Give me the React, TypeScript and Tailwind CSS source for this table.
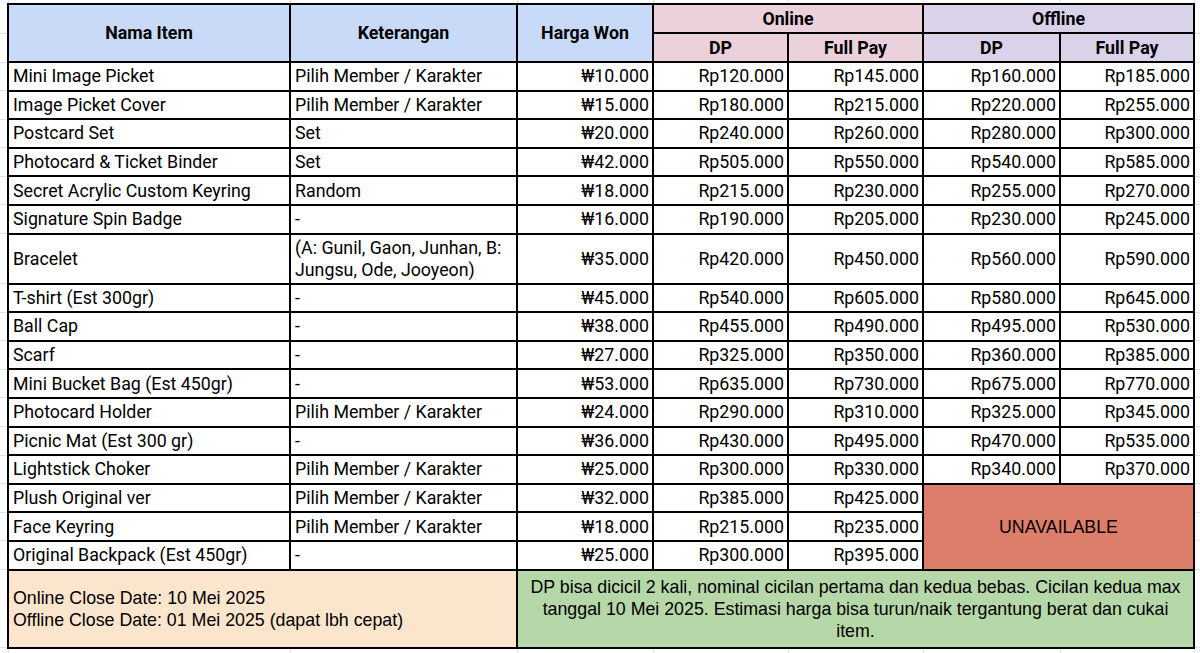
type Row = {
  name: string;
  note: string;
  won: string;
  onDp: string;
  onFull: string;
  offDp?: string;
  offFull?: string;
  tall?: boolean;
};

const rows: Row[] = [
  { name: "Mini Image Picket", note: "Pilih Member / Karakter", won: "₩10.000", onDp: "Rp120.000", onFull: "Rp145.000", offDp: "Rp160.000", offFull: "Rp185.000" },
  { name: "Image Picket Cover", note: "Pilih Member / Karakter", won: "₩15.000", onDp: "Rp180.000", onFull: "Rp215.000", offDp: "Rp220.000", offFull: "Rp255.000" },
  { name: "Postcard Set", note: "Set", won: "₩20.000", onDp: "Rp240.000", onFull: "Rp260.000", offDp: "Rp280.000", offFull: "Rp300.000" },
  { name: "Photocard & Ticket Binder", note: "Set", won: "₩42.000", onDp: "Rp505.000", onFull: "Rp550.000", offDp: "Rp540.000", offFull: "Rp585.000" },
  { name: "Secret Acrylic Custom Keyring", note: "Random", won: "₩18.000", onDp: "Rp215.000", onFull: "Rp230.000", offDp: "Rp255.000", offFull: "Rp270.000" },
  { name: "Signature Spin Badge", note: "-", won: "₩16.000", onDp: "Rp190.000", onFull: "Rp205.000", offDp: "Rp230.000", offFull: "Rp245.000" },
  { name: "Bracelet", note: "(A: Gunil, Gaon, Junhan, B: Jungsu, Ode, Jooyeon)", won: "₩35.000", onDp: "Rp420.000", onFull: "Rp450.000", offDp: "Rp560.000", offFull: "Rp590.000", tall: true },
  { name: "T-shirt (Est 300gr)", note: "-", won: "₩45.000", onDp: "Rp540.000", onFull: "Rp605.000", offDp: "Rp580.000", offFull: "Rp645.000" },
  { name: "Ball Cap", note: "-", won: "₩38.000", onDp: "Rp455.000", onFull: "Rp490.000", offDp: "Rp495.000", offFull: "Rp530.000" },
  { name: "Scarf", note: "-", won: "₩27.000", onDp: "Rp325.000", onFull: "Rp350.000", offDp: "Rp360.000", offFull: "Rp385.000" },
  { name: "Mini Bucket Bag (Est 450gr)", note: "-", won: "₩53.000", onDp: "Rp635.000", onFull: "Rp730.000", offDp: "Rp675.000", offFull: "Rp770.000" },
  { name: "Photocard Holder", note: "Pilih Member / Karakter", won: "₩24.000", onDp: "Rp290.000", onFull: "Rp310.000", offDp: "Rp325.000", offFull: "Rp345.000" },
  { name: "Picnic Mat (Est 300 gr)", note: "-", won: "₩36.000", onDp: "Rp430.000", onFull: "Rp495.000", offDp: "Rp470.000", offFull: "Rp535.000" },
  { name: "Lightstick Choker", note: "Pilih Member / Karakter", won: "₩25.000", onDp: "Rp300.000", onFull: "Rp330.000", offDp: "Rp340.000", offFull: "Rp370.000" },
  { name: "Plush Original ver", note: "Pilih Member / Karakter", won: "₩32.000", onDp: "Rp385.000", onFull: "Rp425.000" },
  { name: "Face Keyring", note: "Pilih Member / Karakter", won: "₩18.000", onDp: "Rp215.000", onFull: "Rp235.000" },
  { name: "Original Backpack (Est 450gr)", note: "-", won: "₩25.000", onDp: "Rp300.000", onFull: "Rp395.000" },
];

// black cell borders
const cell = "border-2 border-black px-[4px] align-middle";
const num = "border-2 border-black pr-[3px] pl-[4px] text-right align-middle whitespace-nowrap";
const gutter = "border-b border-[#e1e1e1] p-0";
const gridTop = "border-r border-[#e1e1e1] p-0";

const App = () => {
  return (
    <div className="w-[1200px] h-[653px] bg-white overflow-hidden">
      <table
        className="table-fixed border-collapse w-[1200px] text-[17.8px] text-black"
        style={{ fontFamily: "Roboto, 'Liberation Sans', sans-serif" }}
      >
        <colgroup>
          <col className="w-[8px]" />
          <col className="w-[282px]" />
          <col className="w-[227px]" />
          <col className="w-[136px]" />
          <col className="w-[135px]" />
          <col className="w-[135px]" />
          <col className="w-[137px]" />
          <col className="w-[134px]" />
          <col className="w-[6px]" />
        </colgroup>
        <tbody>
          {/* sheet gridlines above the table */}
          <tr className="h-[4px]">
            <td className={gridTop} />
            <td className={gridTop} />
            <td className={gridTop} />
            <td className={gridTop} />
            <td className={gridTop} />
            <td className={gridTop} />
            <td className={gridTop} />
            <td className={gridTop} />
            <td className="p-0" />
          </tr>

          <tr className="h-[29px] leading-5 font-bold">
            <td className={gutter} />
            <td rowSpan={2} className={`${cell} bg-[#c9daf8] text-center`}>Nama Item</td>
            <td rowSpan={2} className={`${cell} bg-[#c9daf8] text-center`}>Keterangan</td>
            <td rowSpan={2} className={`${cell} bg-[#c9daf8] text-center`}>Harga Won</td>
            <td colSpan={2} className={`${cell} bg-[#ead1dc] text-center`}>Online</td>
            <td colSpan={2} className={`${cell} bg-[#d9d2e9] text-center`}>Offline</td>
            <td className={gutter} />
          </tr>
          <tr className="h-[29px] leading-5 font-bold">
            <td className={gutter} />
            <td className={`${cell} bg-[#ead1dc] text-center`}>DP</td>
            <td className={`${cell} bg-[#ead1dc] text-center`}>Full Pay</td>
            <td className={`${cell} bg-[#d9d2e9] text-center`}>DP</td>
            <td className={`${cell} bg-[#d9d2e9] text-center`}>Full Pay</td>
            <td className={gutter} />
          </tr>

          {rows.map((r, i) => (
            <tr key={r.name} className={r.tall ? "h-[50px] leading-[21.5px]" : "h-[28.6px] leading-5"}>
              <td className={gutter} />
              <td className={`${cell} whitespace-nowrap overflow-hidden`}>{r.name}</td>
              <td className={cell}>{r.note}</td>
              <td className={num}>{r.won}</td>
              <td className={num}>{r.onDp}</td>
              <td className={num}>{r.onFull}</td>
              {r.offDp ? (
                <>
                  <td className={num}>{r.offDp}</td>
                  <td className={num}>{r.offFull}</td>
                </>
              ) : i === 14 ? (
                <td
                  rowSpan={3}
                  colSpan={2}
                  className={`${cell} bg-[#dd7e6b] text-center`}
                  style={{ fontFamily: "'Liberation Sans', Arial, sans-serif" }}
                >
                  UNAVAILABLE
                </td>
              ) : null}
              <td className={gutter} />
            </tr>
          ))}

          <tr className="h-[78px] leading-[22px]" style={{ fontFamily: "'Liberation Sans', Arial, sans-serif" }}>
            <td className={gutter} />
            <td colSpan={2} className={`${cell} bg-[#fce5cd] text-left`}>
              Online Close Date: 10 Mei 2025
              <br />
              Offline Close Date: 01 Mei 2025 (dapat lbh cepat)
            </td>
            <td colSpan={4 + 1} className={`${cell} bg-[#b6d7a8] text-center px-[8px]`}>
              DP bisa dicicil 2 kali, nominal cicilan pertama dan kedua bebas. Cicilan kedua max tanggal 10 Mei 2025.
              Estimasi harga bisa turun/naik tergantung berat dan cukai item.
            </td>
            <td className={gutter} />
          </tr>

          {/* sheet gridlines below the table */}
          <tr className="h-[8px]">
            <td className={gridTop} />
            <td className={gridTop} />
            <td className={gridTop} />
            <td className={gridTop} />
            <td className={gridTop} />
            <td className={gridTop} />
            <td className={gridTop} />
            <td className={gridTop} />
            <td className="p-0" />
          </tr>
        </tbody>
      </table>
    </div>
  );
};

export default App;
